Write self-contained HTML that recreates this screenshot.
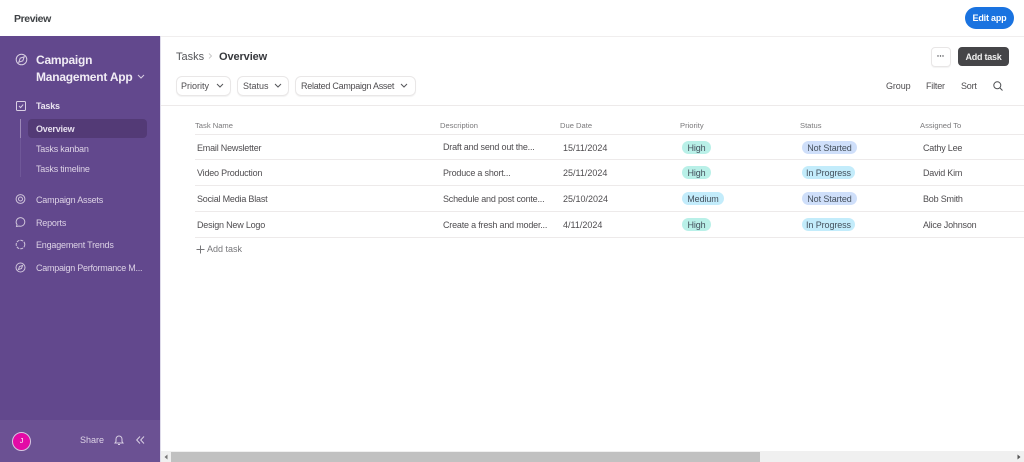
<!DOCTYPE html>
<html><head><meta charset="utf-8"><style>
html,body{margin:0;padding:0;width:1024px;height:462px;overflow:hidden;background:#fff;font-family:"Liberation Sans",sans-serif}
.t{position:absolute;white-space:nowrap;line-height:14px;font-size:9px;letter-spacing:-.2px}
.a{position:absolute}
.s{color:#ddd3e6}
.g{color:#4f4d50}
.h{color:#7a797b;font-size:7.6px;letter-spacing:0}
.line{position:absolute;height:1px;background:#edeaea}
.pill{position:absolute;height:13px;line-height:14px;border-radius:7px;font-size:9px;color:#44505c;text-align:center;letter-spacing:-.1px}
.fb{position:absolute;top:76px;height:18px;border:1px solid #e9e7e7;border-radius:6px;box-shadow:0 1px 1px #f2f2f2}
svg{position:absolute;overflow:visible}
</style></head><body>
<div class="t" style="left:14px;top:12px;font-size:10.5px;font-weight:bold;color:#3f4245;letter-spacing:-.4px">Preview</div>
<div class="a" style="left:965px;top:7px;width:49px;height:22px;border-radius:11px;background:#1a73e0;color:#fff;font-size:9px;font-weight:bold;text-align:center;line-height:22px;letter-spacing:-.2px">Edit app</div>
<div class="line" style="left:160px;top:36px;width:864px;background:#f0eeee"></div>

<div class="a" style="left:0;top:36px;width:160px;height:426px;background:#62488d"></div>
<div class="a" style="left:0;top:420px;width:160px;height:42px;background:#6b5193"></div>
<div class="a" style="left:160px;top:36px;width:1px;height:426px;background:#dedbea"></div>

<svg style="left:15px;top:53px" width="14" height="14" viewBox="0 0 14 14" fill="none" stroke="#d9cfe3" stroke-width="1"><circle cx="6.500" cy="6.500" r="5.300"/><path d="M9.200 3.800 7.800 7.800 3.800 9.200 5.200 5.200Z"/></svg>
<div class="t" style="left:36px;top:52px;font-size:12px;font-weight:bold;color:#f1ecf5;line-height:17px;letter-spacing:-.22px">Campaign<br>Management App</div>
<svg style="left:137px;top:74px" width="8" height="6" fill="none" stroke="#d9cfe3"><path d="M1 1 4 4 7 1"/></svg>

<svg style="left:16px;top:101px" width="11" height="11" fill="none" stroke="#d9cfe3" stroke-width="1"><rect x=".5" y=".5" width="9" height="9" rx="1"/><path d="M3 5 4.600 6.600 7.200 3.600"/></svg>
<div class="t" style="left:36px;top:99px;font-weight:bold;color:#eae4f0">Tasks</div>
<div class="a" style="left:20px;top:119px;width:1px;height:58px;background:#6f5798"></div>
<div class="a" style="left:20px;top:119px;width:1px;height:19px;background:#9d89b8"></div>
<div class="a" style="left:28px;top:119px;width:119px;height:19px;border-radius:4px;background:#533a76"></div>
<div class="t" style="left:36px;top:122px;font-weight:bold;color:#e6dfee">Overview</div>
<div class="t s" style="left:36px;top:142px">Tasks kanban</div>
<div class="t s" style="left:36px;top:162px">Tasks timeline</div>

<svg style="left:15px;top:194px" width="11" height="11" fill="none" stroke="#cfc4da"><circle cx="5.500" cy="5" r="4.400"/><circle cx="5.500" cy="5" r="2"/></svg>
<div class="t s" style="left:36px;top:193px">Campaign Assets</div>
<svg style="left:15px;top:217px" width="11" height="11" fill="none" stroke="#cfc4da"><path d="M1.500 9.500 2 7.500A4.300 4.300 0 1 1 4 9Z"/></svg>
<div class="t s" style="left:36px;top:216px">Reports</div>
<svg style="left:15px;top:239px" width="11" height="11" fill="none" stroke="#cfc4da" stroke-dasharray="3 1"><circle cx="5.500" cy="5.500" r="4.300"/></svg>
<div class="t s" style="left:36px;top:238px">Engagement Trends</div>
<svg style="left:15px;top:262px" width="11" height="11" fill="none" stroke="#cfc4da"><circle cx="5.500" cy="5.500" r="4.500"/><path d="M7.600 3.400 6.500 6.500 3.400 7.600 4.500 4.500Z"/></svg>
<div class="t s" style="left:36px;top:261px;letter-spacing:-.25px">Campaign Performance M...</div>

<div class="a" style="left:12px;top:432px;width:17px;height:17px;border-radius:50%;background:#e30aa6;border:1px solid #d8c6e2;color:#fff;font-size:7px;line-height:17px;text-align:center">J</div>
<div class="t s" style="left:80px;top:433px;letter-spacing:0">Share</div>
<svg style="left:114px;top:435px" width="10" height="11" fill="none" stroke="#d9cfe3"><path d="M1 8H9L8 6.500V4A3 3 0 0 0 2 4V6.500ZM4 9.500H6"/></svg>
<svg style="left:136px;top:436px" width="9" height="9" fill="none" stroke="#d9cfe3"><path d="M4 .5 .7 4 4 7.500M8 .5 4.700 4 8 7.500"/></svg>

<div class="t" style="left:176px;top:50px;font-size:11px;color:#55565a;letter-spacing:0">Tasks</div>
<svg style="left:208px;top:53px" width="5" height="7" fill="none" stroke="#c9c9c9"><path d="M1 .5 3.500 3 1 5.500"/></svg>
<div class="t" style="left:219px;top:50px;font-size:11px;font-weight:bold;color:#37393d;letter-spacing:-.1px">Overview</div>

<div class="fb" style="left:176px;width:53px"></div>
<div class="t g" style="left:181px;top:79px;letter-spacing:0">Priority</div>
<svg style="left:216px;top:83px" width="8" height="6" fill="none" stroke="#55565a"><path d="M1 1 4 4 7 1"/></svg>
<div class="fb" style="left:237px;width:50px"></div>
<div class="t g" style="left:243px;top:79px;letter-spacing:0">Status</div>
<svg style="left:274px;top:83px" width="8" height="6" fill="none" stroke="#55565a"><path d="M1 1 4 4 7 1"/></svg>
<div class="fb" style="left:295px;width:119px"></div>
<div class="t g" style="left:301px;top:79px;letter-spacing:-.27px">Related Campaign Asset</div>
<svg style="left:400px;top:83px" width="8" height="6" fill="none" stroke="#55565a"><path d="M1 1 4 4 7 1"/></svg>

<div class="a" style="left:931px;top:47px;width:18px;height:18px;border:1px solid #e8e6e6;border-radius:4px;box-shadow:0 1px 1px #f2f2f2"></div>
<svg style="left:937px;top:55px" width="8" height="3"><circle cx="1" cy="1" r=".7" fill="#44464a"/><circle cx="3.500" cy="1" r=".7" fill="#44464a"/><circle cx="6" cy="1" r=".7" fill="#44464a"/></svg>
<div class="a" style="left:958px;top:47px;width:51px;height:19px;border-radius:4px;background:#454548;color:#f0f0f0;font-size:9px;font-weight:bold;text-align:center;line-height:20px;letter-spacing:-.25px">Add task</div>
<div class="t g" style="left:886px;top:79px;letter-spacing:-.1px">Group</div>
<div class="t g" style="left:926px;top:79px">Filter</div>
<div class="t g" style="left:961px;top:79px">Sort</div>
<svg style="left:993px;top:81px" width="10" height="10" fill="none" stroke="#4f5154"><circle cx="4.300" cy="4.300" r="3.500"/><path d="M7 7 9.500 9.500"/></svg>
<div class="line" style="left:161px;top:105px;width:863px"></div>

<div class="t h" style="left:195px;top:119px">Task Name</div>
<div class="t h" style="left:440px;top:119px">Description</div>
<div class="t h" style="left:560px;top:119px">Due Date</div>
<div class="t h" style="left:680px;top:119px">Priority</div>
<div class="t h" style="left:800px;top:119px">Status</div>
<div class="t h" style="left:920px;top:119px">Assigned To</div>
<div class="line" style="left:195px;top:134px;width:829px"></div>
<div class="line" style="left:195px;top:159px;width:829px"></div>
<div class="line" style="left:195px;top:185px;width:829px"></div>
<div class="line" style="left:195px;top:211px;width:829px"></div>
<div class="line" style="left:195px;top:237px;width:829px"></div>

<div class="t g" style="left:197px;top:141px">Email Newsletter</div>
<div class="t g" style="left:443px;top:140px">Draft and send out the...</div>
<div class="t g" style="left:563px;top:141px;letter-spacing:0">15/11/2024</div>
<div class="pill" style="left:682px;top:141px;width:29px;background:#b9f0e8">High</div>
<div class="pill" style="left:802px;top:141px;width:55px;background:#cfdffa">Not Started</div>
<div class="t g" style="left:923px;top:141px">Cathy Lee</div>

<div class="t g" style="left:197px;top:166px">Video Production</div>
<div class="t g" style="left:443px;top:166px">Produce a short...</div>
<div class="t g" style="left:563px;top:166px;letter-spacing:0">25/11/2024</div>
<div class="pill" style="left:682px;top:166px;width:29px;background:#b9f0e8">High</div>
<div class="pill" style="left:802px;top:166px;width:53px;background:#c3ecfb">In Progress</div>
<div class="t g" style="left:923px;top:166px">David Kim</div>

<div class="t g" style="left:197px;top:192px">Social Media Blast</div>
<div class="t g" style="left:443px;top:192px">Schedule and post conte...</div>
<div class="t g" style="left:563px;top:192px;letter-spacing:0">25/10/2024</div>
<div class="pill" style="left:682px;top:192px;width:42px;background:#c3ecfb">Medium</div>
<div class="pill" style="left:802px;top:192px;width:55px;background:#cfdffa">Not Started</div>
<div class="t g" style="left:923px;top:192px">Bob Smith</div>

<div class="t g" style="left:197px;top:218px">Design New Logo</div>
<div class="t g" style="left:443px;top:218px">Create a fresh and moder...</div>
<div class="t g" style="left:563px;top:218px;letter-spacing:0">4/11/2024</div>
<div class="pill" style="left:682px;top:218px;width:29px;background:#b9f0e8">High</div>
<div class="pill" style="left:802px;top:218px;width:53px;background:#c3ecfb">In Progress</div>
<div class="t g" style="left:923px;top:218px">Alice Johnson</div>

<svg style="left:196px;top:245px" width="9" height="9" fill="none" stroke="#77777a"><path d="M4.500 .5V8.500M.5 4.500H8.500"/></svg>
<div class="t" style="left:207px;top:242px;color:#77777a;letter-spacing:0">Add task</div>

<div class="a" style="left:161px;top:451px;width:863px;height:11px;background:#f0f0f0"></div>
<div class="a" style="left:171px;top:452px;width:589px;height:10px;background:#c1c1c1"></div>
<svg style="left:164px;top:454px" width="4" height="6"><path d="M3.500 .5V5.500L.5 3Z" fill="#777"/></svg>
<svg style="left:1017px;top:454px" width="4" height="6"><path d="M.5 .5V5.500L3.500 3Z" fill="#555"/></svg>
</body></html>
